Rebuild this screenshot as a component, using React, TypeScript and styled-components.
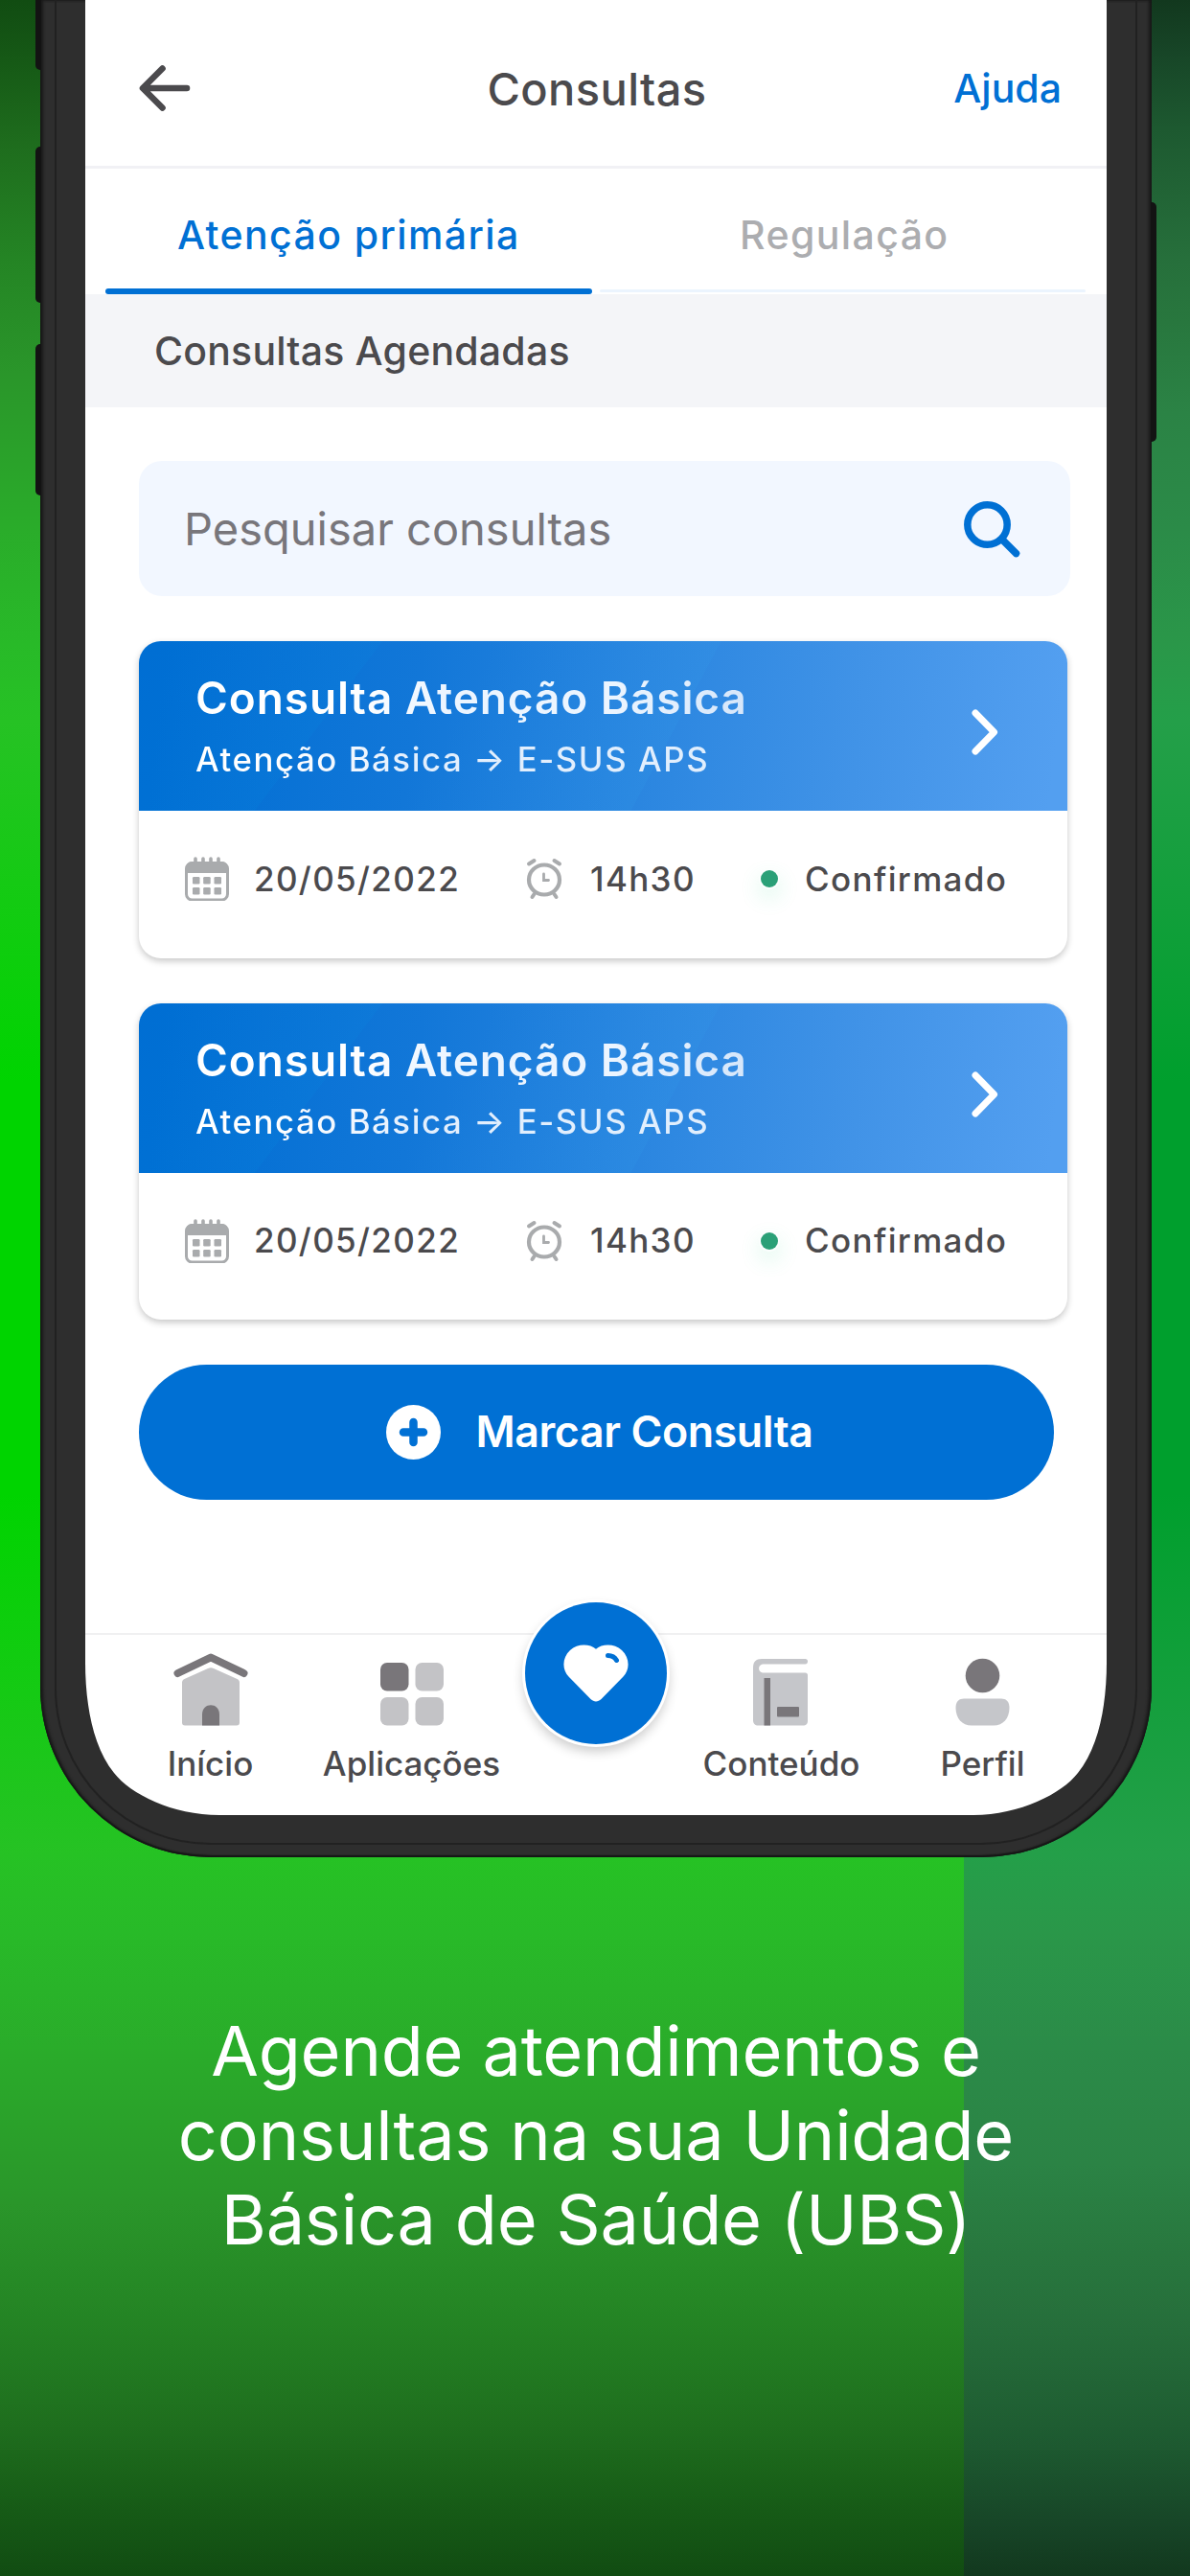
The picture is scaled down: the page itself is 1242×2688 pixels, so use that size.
import { ReactNode } from 'react';
import styled, { createGlobalStyle } from 'styled-components';

const BLUE = '#0070d4';
const INK = '#4b4a4d';

const GlobalStyle = createGlobalStyle`
    * {
        box-sizing: border-box;
    }

    body {
        margin: 0;
        font-family: Inter, Roboto, 'Liberation Sans', sans-serif;
        color: ${INK};
    }

    button {
        border: none;
        padding: 0;
        margin: 0;
        background: none;
        font: inherit;
        color: inherit;
    }

    h1,
    h2,
    h3,
    p {
        margin: 0;
        font-weight: inherit;
    }

    svg {
        display: block;
        flex-shrink: 0;
    }
`;

const Poster = styled.main`
    position: relative;
    width: 1242px;
    height: 2688px;
    overflow: hidden;
    background:
        linear-gradient(
                180deg,
                #12381e 0%,
                #174527 2%,
                #1d5930 5%,
                #266f3b 10%,
                #28773e 12.5%,
                #2b8345 16%,
                #2b8b48 20.5%,
                #2a9749 25%,
                #249f49 28%,
                #009f2d 42%,
                #009f2d 58%,
                #249f49 72%,
                #2a9749 75%,
                #2b8b48 79.5%,
                #2b8345 84%,
                #28773e 87.5%,
                #266f3b 90%,
                #1d5930 95%,
                #174527 98%,
                #12381e 100%
            )
            right / 236px 100% no-repeat,
        linear-gradient(
            180deg,
            #114c12 0%,
            #165a16 2.5%,
            #1e6c1d 5.5%,
            #248424 10%,
            #2a962a 14.5%,
            #2aac2a 20.5%,
            #28ba28 25%,
            #26c224 28%,
            #00d400 42%,
            #00d400 58%,
            #26c224 72%,
            #28ba28 75%,
            #2aac2a 79.5%,
            #2a962a 85.5%,
            #248424 90%,
            #1e6c1d 94.5%,
            #165a16 97.5%,
            #114c12 100%
        );
`;

const Phone = styled.section`
    position: relative;
    width: 1160px;
    height: 1938px;
    margin-left: 42px;
    padding: 0 47px 44px;
    border-radius: 0 0 178px 178px;
    background: #2e2e2e;
    box-shadow:
        inset 0 -2px 1px #161616,
        inset 3px 0 3px #191919,
        inset -3px 0 3px #191919;

    /* seam between the bezel and the outer frame */
    &::after {
        content: '';
        position: absolute;
        inset: -4px 15px 13px;
        border: 2px solid #212121;
        border-radius: 0 0 163px 163px;
        pointer-events: none;
    }
`;

const SideKey = styled.i<{ $side: 'left' | 'right'; $top: number; $height: number }>`
    position: absolute;
    ${({ $side }) => $side}: -5px;
    top: ${({ $top }) => $top}px;
    width: 6px;
    height: ${({ $height }) => $height}px;
    border-radius: ${({ $side }) => ($side === 'left' ? '5px 0 0 5px' : '0 5px 5px 0')};
    background: #131313;
`;

const Screen = styled.div`
    display: flex;
    flex-direction: column;
    width: 1066px;
    height: 1894px;
    background: #ffffff;
    clip-path: path(
        'M0 0H1066V1735C1066 1775 1059 1822 1036 1850C1019 1872 975 1894 926 1894H140C91 1894 47 1872 30 1850C7 1822 0 1775 0 1735Z'
    );
`;

const TopBar = styled.header`
    display: grid;
    grid-template-columns: 1fr auto 1fr;
    align-items: center;
    height: 176px;
    padding: 11px 47px 0 56px;
    border-bottom: 3px solid #f1f1f5;
`;

const ScreenTitle = styled.h1`
    margin-left: -7px;
    font-size: 47px;
    font-weight: 500;
    letter-spacing: 0.4px;
`;

const HelpLink = styled.button`
    justify-self: end;
    font-size: 41px;
    font-weight: 500;
    color: ${BLUE};
`;

const Tabs = styled.nav`
    display: flex;
    gap: 8px;
    height: 131px;
    padding: 0 22px 0 21px;
`;

const Tab = styled.button<{ $active?: boolean }>`
    position: relative;
    flex: 1;
    padding: 8px 0 2px;
    text-indent: ${({ $active }) => ($active ? 0 : 4)}px;
    font-size: 41px;
    font-weight: 500;
    letter-spacing: 1.4px;
    color: ${({ $active }) => ($active ? BLUE : '#acadb0')};

    &::after {
        content: '';
        position: absolute;
        left: 0;
        right: 0;
        bottom: ${({ $active }) => ($active ? 0 : 2)}px;
        height: ${({ $active }) => ($active ? 6 : 3)}px;
        border-radius: 3px;
        background: ${({ $active }) => ($active ? BLUE : '#ebf4fe')};
    }
`;

const SectionTitle = styled.h2`
    display: flex;
    align-items: center;
    height: 118px;
    padding-left: 72px;
    background: #f4f5f8;
    font-size: 41px;
    font-weight: 500;
    letter-spacing: 0.2px;
`;

const Content = styled.div`
    flex: 1;
    display: flex;
    flex-direction: column;
    gap: 47px;
    padding: 56px 0 0 56px;
`;

const SearchField = styled.label`
    display: flex;
    align-items: center;
    justify-content: space-between;
    width: 972px;
    height: 141px;
    padding: 0 52px 0 47px;
    border-radius: 24px;
    background: #f2f7ff;
    font-size: 47px;
    color: #78767b;
`;

const Card = styled.article`
    width: 969px;
    height: 330.5px;
    border-radius: 23px;
    background: #ffffff;
    box-shadow: 0 3px 7px rgba(0, 0, 0, 0.22);
    overflow: hidden;
`;

const CardHeader = styled.div`
    display: flex;
    justify-content: space-between;
    height: 177px;
    padding: 30px 72px 0 59px;
    background:
        linear-gradient(127deg, rgba(0, 150, 240, 0) 0%, rgba(0, 150, 230, 0.1) 23%, transparent 23.1%),
        linear-gradient(118deg, transparent 35%, rgba(50, 160, 235, 0.14) 57.1%, transparent 57.2%),
        linear-gradient(97deg, #006ed3 3%, #1277d8 30%, #2e88e1 58%, #4193e7 77%, #539ff0 98%);

    svg {
        margin-top: 41px;
    }
`;

const CardHeading = styled.div`
    display: flex;
    flex-direction: column;
    gap: 7px;
`;

const CardTitle = styled.h3`
    line-height: 58px;
    font-size: 46px;
    font-weight: 600;
    letter-spacing: 0.9px;
    color: transparent;
    background: linear-gradient(95deg, #ffffff 28%, #ecf5ff 45%, #ecf5ff 75%, #d5e6fa 100%);
    background-clip: text;
`;

const CardSubtitle = styled.p`
    line-height: 56px;
    font-size: 34.8px;
    font-weight: 500;
    letter-spacing: 1.55px;
    color: transparent;
    background: linear-gradient(95deg, #ffffff 15%, #e3effd 40%, #e0eefd 100%);
    background-clip: text;
`;

const CardDetails = styled.div`
    display: grid;
    grid-template-columns: 72px 284px 67px 178px 46px auto;
    align-items: center;
    height: 48px;
    margin: 47px 0 0 48px;
    font-size: 35px;
    font-weight: 500;
    line-height: 46px;
    letter-spacing: 1.35px;

    span {
        padding-bottom: 1px;
    }
`;

const StatusDot = styled.i`
    width: 18px;
    height: 18px;
    border-radius: 50%;
    background: #2ba077;
    box-shadow:
        0 0 0 2px #fbfefd,
        0 9px 20px 4px rgba(60, 215, 150, 0.13);
`;

const ScheduleButton = styled.button`
    display: flex;
    align-items: center;
    justify-content: center;
    gap: 36px;
    width: 955px;
    height: 141px;
    padding-left: 7px;
    border-radius: 71px;
    background: ${BLUE};
    color: #ffffff;
    font-size: 44.7px;
    font-weight: 600;
    line-height: 56px;
    letter-spacing: -0.4px;

    span {
        padding-bottom: 2px;
    }
`;

const BottomNav = styled.nav`
    position: relative;
    display: grid;
    grid-template-columns: 205px 215px 171px 215px 205px;
    height: 190px;
    padding: 17px 0 0 28px;
    border-top: 2px solid #f0f0f1;
`;

const NavItem = styled.button`
    display: flex;
    flex-direction: column;
    align-items: center;
    gap: 17px;
    font-size: 35px;
    font-weight: 500;
    line-height: 44px;
`;

const HeartButton = styled.button`
    position: absolute;
    left: 459px;
    top: -34px;
    display: grid;
    place-items: center;
    width: 148px;
    height: 148px;
    border-radius: 50%;
    background: ${BLUE};
    box-shadow:
        0 0 0 3px #ffffff,
        0 6px 12px 2px rgba(0, 0, 0, 0.2);
`;

const Caption = styled.p`
    width: 1000px;
    margin: 158px auto 0;
    padding-left: 2px;
    text-align: center;
    font-size: 72px;
    font-weight: 400;
    line-height: 88px;
    letter-spacing: -0.2px;
    color: #ffffff;
`;

const ArrowLeft = () => (
    <svg width="54" height="50" viewBox="0 0 54 50" fill="none">
        <path
            d="M50 25H4.500M24.500 4.500L4 25L24.500 45.500"
            stroke={INK}
            strokeWidth="6.600"
            strokeLinecap="round"
            strokeLinejoin="round"
        />
    </svg>
);

const SearchIcon = () => (
    <svg width="60" height="60" viewBox="0 0 60 60" fill="none">
        <circle cx="25.500" cy="25.500" r="20.700" stroke={BLUE} strokeWidth="7.500" />
        <path d="M41 41L55.500 55.500" stroke={BLUE} strokeWidth="7.500" strokeLinecap="round" />
    </svg>
);

const ChevronRight = () => (
    <svg width="28" height="48" viewBox="0 0 28 48" fill="none">
        <path
            d="M4 4L23.500 24L4 44"
            stroke="#ffffff"
            strokeWidth="7"
            strokeLinecap="round"
            strokeLinejoin="round"
        />
    </svg>
);

const CalendarIcon = () => (
    <svg width="46" height="46" viewBox="0 0 46 46" fill="none">
        <rect x="1.500" y="6.500" width="43" height="38.500" rx="6" stroke="#a9abad" strokeWidth="3" />
        <path d="M1 17V12C1 8 4 5 8 5H38C42 5 45 8 45 12V17Z" fill="#a9abad" />
        <path d="M11 2V7M19 2V7M27 2V7M35 2V7" stroke="#a9abad" strokeWidth="3.600" strokeLinecap="round" />
        {[21, 32].map((y) =>
            [8, 19.2, 30.5].map((x) => (
                <rect key={`${x}-${y}`} x={x} y={y} width="7.500" height="7.500" rx="1.300" fill="#a9abad" />
            ))
        )}
    </svg>
);

const AlarmIcon = () => (
    <svg width="38" height="44" viewBox="0 0 38 44" fill="none" stroke="#a9abad" strokeLinecap="round">
        <ellipse cx="19" cy="23" rx="16" ry="15.500" strokeWidth="4.200" />
        <path d="M3 6.500L8.500 3M35 6.500L29.500 3" strokeWidth="4" />
        <path d="M8.500 38L6.500 41M29.500 38L31.500 41" strokeWidth="4" />
        <path d="M18.500 17V23.500H23.500" strokeWidth="2.800" />
    </svg>
);

const PlusCircle = () => (
    <svg width="57" height="57" viewBox="0 0 57 57">
        <circle cx="28.500" cy="28.500" r="28.500" fill="#ffffff" />
        <path d="M28.500 18V39M18 28.500H39" stroke={BLUE} strokeWidth="8.500" strokeLinecap="round" />
    </svg>
);

const HeartIcon = () => (
    <svg width="68" height="60" viewBox="0 0 68 60">
        <path
            d="M34 4.700C28 -0.500 15 -1.500 7 6C-1.500 14 -1.500 26 5.500 33.500L28.500 57C32 60.300 36 60.300 39.500 57L62.500 33.500C69.500 26 69.500 14 61 6C53 -1.500 40 -0.500 34 4.700Z"
            fill="#ffffff"
        />
        <path d="M46.500 11.500C50.500 11.500 53.500 13 55.500 16.500" stroke={BLUE} strokeWidth="5" strokeLinecap="round" fill="none" />
    </svg>
);

const HomeIcon = () => (
    <svg width="78" height="78" viewBox="0 0 78 78">
        <path d="M9 33C9 31 9.500 30 11.500 29L36 18C38 17 40 17 42 18L66.500 29C68.500 30 69 31 69 33V74.500C69 76.500 68 77.500 66 77.500H12C10 77.500 9 76.500 9 74.500Z" fill="#c3c3c6" />
        <path d="M4.500 23L39 6.500L73.500 23" stroke="#79767a" strokeWidth="8" strokeLinecap="round" strokeLinejoin="round" fill="none" />
        <path d="M30 77.500V66C30 53 48 53 48 66V77.500Z" fill="#79767a" />
    </svg>
);

const AppsIcon = () => (
    <svg width="66" height="78" viewBox="0 0 66 78" fill="#c3c3c6">
        <rect x="0" y="12" width="29.500" height="29.500" rx="7" fill="#79767a" />
        <rect x="36.500" y="12" width="29.500" height="29.500" rx="7" />
        <rect x="0" y="48" width="29.500" height="29.500" rx="7" />
        <rect x="36.500" y="48" width="29.500" height="29.500" rx="7" />
    </svg>
);

const BookIcon = () => (
    <svg width="60" height="78" viewBox="0 0 60 78">
        <path
            d="M9 8H54.500C56 8 57 9 57 10.500C57 12.500 56 13.500 54.500 13.500H11C4.500 13.500 4.500 22.500 11 22.500H54.500C56 22.500 57 23.500 57 25V72.500C57 76 55.500 77.500 52 77.500H5.500C2 77.500 0 75.500 0 72V17C0 11 3 8 9 8Z"
            fill="#c5c6ca"
        />
        <path d="M11.500 28H18V77.500H11.500Z" fill="#79767a" />
        <rect x="25" y="58" width="23" height="10.500" rx="1" fill="#79767a" />
    </svg>
);

const PersonIcon = () => (
    <svg width="57" height="78" viewBox="0 0 57 78">
        <circle cx="28.500" cy="25.500" r="17.800" fill="#79767a" />
        <path d="M9 49.500H48C53.500 49.500 56.500 53 56.500 59C56.500 70 50 77.500 40 77.500H17C7 77.500 0.500 70 0.500 59C0.500 53 3.500 49.500 9 49.500Z" fill="#c5c6ca" />
    </svg>
);

type Appointment = {
    id: number;
    title: string;
    origin: string;
    system: string;
    date: string;
    time: string;
    status: string;
};

const appointments: Appointment[] = [1, 2].map((id) => ({
    id,
    title: 'Consulta Atenção Básica',
    origin: 'Atenção Básica',
    system: 'E-SUS APS',
    date: '20/05/2022',
    time: '14h30',
    status: 'Confirmado',
}));

const AppointmentCard = ({ title, origin, system, date, time, status }: Appointment) => {
    return (
        <Card>
            <CardHeader>
                <CardHeading>
                    <CardTitle>{title}</CardTitle>
                    <CardSubtitle>
                        {origin} → {system}
                    </CardSubtitle>
                </CardHeading>
                <ChevronRight />
            </CardHeader>
            <CardDetails>
                <CalendarIcon />
                <span>{date}</span>
                <AlarmIcon />
                <span>{time}</span>
                <StatusDot />
                <span>{status}</span>
            </CardDetails>
        </Card>
    );
};

type NavLinkProps = {
    label: string;
    icon: ReactNode;
};

const NavLink = ({ label, icon }: NavLinkProps) => (
    <NavItem>
        {icon}
        {label}
    </NavItem>
);

const App = () => {
    return (
        <Poster>
            <GlobalStyle />
            <Phone>
                <SideKey $side="left" $top={-10} $height={83} />
                <SideKey $side="left" $top={153} $height={163} />
                <SideKey $side="left" $top={359} $height={158} />
                <SideKey $side="right" $top={211} $height={250} />
                <Screen>
                    <TopBar>
                        <ArrowLeft />
                        <ScreenTitle>Consultas</ScreenTitle>
                        <HelpLink>Ajuda</HelpLink>
                    </TopBar>
                    <Tabs>
                        <Tab $active>Atenção primária</Tab>
                        <Tab>Regulação</Tab>
                    </Tabs>
                    <SectionTitle>Consultas Agendadas</SectionTitle>
                    <Content>
                        <SearchField>
                            Pesquisar consultas
                            <SearchIcon />
                        </SearchField>
                        {appointments.map((appointment) => (
                            <AppointmentCard key={appointment.id} {...appointment} />
                        ))}
                        <ScheduleButton>
                            <PlusCircle />
                            <span>Marcar Consulta</span>
                        </ScheduleButton>
                    </Content>
                    <BottomNav>
                        <NavLink label="Início" icon={<HomeIcon />} />
                        <NavLink label="Aplicações" icon={<AppsIcon />} />
                        <span />
                        <NavLink label="Conteúdo" icon={<BookIcon />} />
                        <NavLink label="Perfil" icon={<PersonIcon />} />
                        <HeartButton>
                            <HeartIcon />
                        </HeartButton>
                    </BottomNav>
                </Screen>
            </Phone>
            <Caption>
                Agende atendimentos e<br />
                consultas na sua Unidade
                <br />
                Básica de Saúde (UBS)
            </Caption>
        </Poster>
    );
};

export default App;
